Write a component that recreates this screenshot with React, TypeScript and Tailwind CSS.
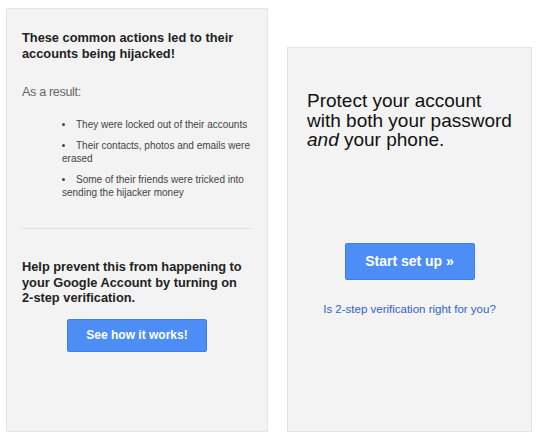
const bullets = [
    'They were locked out of their accounts',
    'Their contacts, photos and emails were erased',
    'Some of their friends were tricked into sending the hijacker money',
];

const App = () => {
    return (
        <div className="w-[550px] h-[434px] bg-white font-['Liberation_Sans',Arial,sans-serif] text-[#222]">
            <div className="flex items-start pl-[6px] pt-[8px] gap-[19px]">
                {/* Left card */}
                <div className="w-[262px] h-[424px] bg-[#f3f3f3] border border-[#e6e6e6] px-[15px] pt-[21px]">
                    <h2 className="text-[12.8px] leading-[16px] font-bold">
                        These common actions led to their accounts being hijacked!
                    </h2>
                    <p className="mt-[22px] text-[12.5px] leading-[16px] text-[#666] tracking-[-0.3px]">As a result:</p>
                    <ul className="mt-[18px] pl-[40px] text-[10px] leading-[13px] text-[#444] space-y-[8px]">
                        {bullets.map((b) => (
                            <li key={b} className="list-disc list-inside">
                                {b}
                            </li>
                        ))}
                    </ul>
                    <div className="mt-[29px] border-t border-[#e0e0e0]" />
                    <p className="mt-[30px] text-[12.8px] leading-[15.5px] font-bold">
                        Help prevent this from happening to your Google Account by turning on{' '}
                        <span className="whitespace-nowrap">2-step</span> verification.
                    </p>
                    <div className="flex justify-center mt-[13px]">
                        <button className="w-[140px] h-[33px] bg-[#4d8ef6] border border-[#3f7fe8] rounded-[2px] text-white text-[12px] font-bold">
                            See how it works!
                        </button>
                    </div>
                </div>

                {/* Right card */}
                <div className="mt-[39px] w-[245px] h-[385px] bg-[#f3f3f3] border border-[#e3e3e3] px-[19px] pt-[43px]">
                    <p className="w-[210px] text-[19px] leading-[19.5px] text-[#111]">
                        Protect your account with both your password <em>and</em> your phone.
                    </p>
                    <div className="flex justify-center mt-[93px]">
                        <button className="w-[130px] h-[37px] bg-[#4d8ef6] border border-[#3f7fe8] rounded-[2px] text-white text-[14px] font-bold">
                            Start set up »
                        </button>
                    </div>
                    <p className="mt-[21px] text-center text-[11.5px] text-[#2f63c4]">
                        <a href="#">Is 2-step verification right for you?</a>
                    </p>
                </div>
            </div>
        </div>
    );
};

export default App;
